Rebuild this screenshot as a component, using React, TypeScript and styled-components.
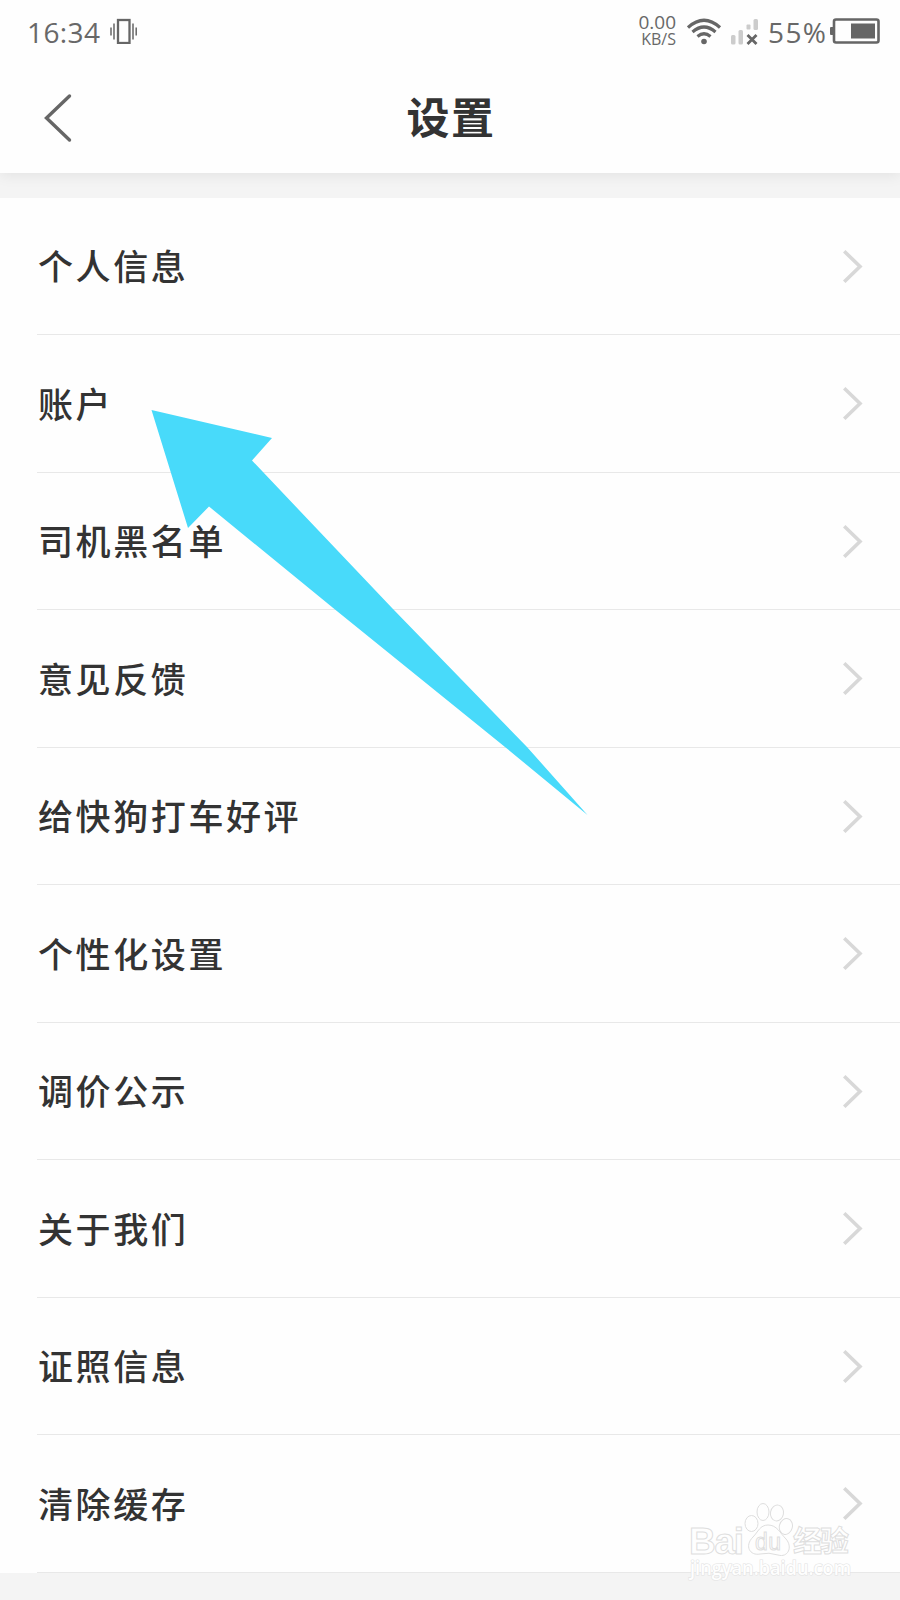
import React from 'react';
import styled, { createGlobalStyle } from 'styled-components';

const GlobalStyle = createGlobalStyle`
  * { box-sizing: border-box; }
  body {
    margin: 0;
    background: #f4f4f4;
    font-family: "Noto Sans CJK SC", sans-serif;
    color: #333;
  }
`;

const Screen = styled.main`
  position: relative;
  width: 900px;
  height: 1600px;
  overflow: hidden;
  background: #f4f4f4;
`;

const Header = styled.header`
  height: 172.5px;
  background: #fefefe;
  box-shadow: 0 2px 14px rgba(0, 0, 0, 0.08);
`;

const StatusBar = styled.div`
  display: flex;
  align-items: center;
  justify-content: space-between;
  height: 62px;
  padding: 0 20px 0 27px;
  color: #686868;
  font-family: "Open Sans", "Noto Sans", sans-serif;
`;

const StatusGroup = styled.div`
  display: flex;
  align-items: center;
`;

const StatusText = styled.span<{ $width: number; $spacing?: number }>`
  width: ${(p) => p.$width}px;
  padding-top: 1px;
  font-size: 28px;
  line-height: 32px;
  letter-spacing: ${(p) => p.$spacing ?? 0}px;
  white-space: nowrap;
`;

const StatusGap = styled.span`
  width: 9px;
`;

const Speed = styled.div`
  display: flex;
  flex-direction: column;
  align-items: flex-end;
  width: 42px;
  margin-right: 11px;
  line-height: 17px;
  font-size: 19px;
`;

const SpeedUnit = styled.span`
  font-size: 16px;
  line-height: 17px;
`;

const NavBar = styled.div`
  display: grid;
  grid-template-columns: 100px 1fr 100px;
  align-items: center;
  height: 110px;
`;

const BackButton = styled.button`
  display: flex;
  padding: 1px 0 0 42px;
  border: 0;
  background: none;
`;

const Title = styled.h1`
  margin: 0 0 4px;
  padding-left: 2px;
  font-size: 43px;
  line-height: 60px;
  font-weight: 700;
  text-align: center;
  letter-spacing: 1.5px;
`;

const List = styled.ul`
  margin: 25px 0 0;
  padding: 0 0 0 37px;
  list-style: none;
  background: #fefefe;
`;

const Row = styled.li`
  display: flex;
  align-items: center;
  justify-content: space-between;
  height: 137.5px;
  padding: 0 37px 0 1px;
  border-bottom: 1px solid #e8e8e8;
`;

const Label = styled.span`
  padding-bottom: 1px;
  font-size: 35px;
  line-height: 50px;
  font-weight: 500;
  letter-spacing: 2.6px;
`;

const Pointer = styled.svg`
  position: absolute;
  left: 150px;
  top: 408px;
`;

const Watermark = styled.svg`
  position: absolute;
  left: 684px;
  top: 1498px;
`;

const items = [
  '个人信息',
  '账户',
  '司机黑名单',
  '意见反馈',
  '给快狗打车好评',
  '个性化设置',
  '调价公示',
  '关于我们',
  '证照信息',
  '清除缓存',
];

const VibrateIcon = () => (
  <svg width="28" height="26" viewBox="0 0 28 26" fill="none" stroke="#666">
    <rect x="8" y="2" width="11.5" height="23" strokeWidth="2.3" />
    <path d="M1 9.500v8M4 5.500v16M23 5.500v16M26.2 9.500v8" strokeWidth="1.5" />
  </svg>
);

const WifiIcon = () => (
  <svg width="35" height="27" viewBox="0 0 35 27" fill="none" stroke="#666" strokeWidth="3.2">
    <path d="M1 9.500Q17-5 33 9.500M5.500 14Q17 4 28.500 14M10.500 18.500Q17 13 23.500 18.500" />
    <circle cx="17" cy="23.500" r="2.800" fill="#666" stroke="none" />
  </svg>
);

const SignalIcon = () => (
  <svg width="28" height="27" viewBox="0 0 28 27">
    <g fill="#ccc">
      <rect x="0" y="17" width="4.500" height="9.500" rx="1.5" />
      <rect x="7.500" y="12" width="4.500" height="14.500" rx="1.5" />
      <rect x="15.500" y="6.500" width="4" height="5" rx="1" />
      <rect x="22.500" y="1" width="4.500" height="11" rx="1.5" />
    </g>
    <path d="M16.500 17l9 9M25.500 17l-9 9" stroke="#666" strokeWidth="2.800" />
  </svg>
);

const BatteryIcon = () => (
  <svg width="50" height="26" viewBox="0 0 50 26">
    <rect x="4" y="1.5" width="44.5" height="23" rx="2" fill="none" stroke="#666" strokeWidth="2.6" />
    <rect x="0" y="9" width="4" height="8" rx="1" fill="#666" />
    <rect x="21" y="5.5" width="24" height="15" fill="#666" />
  </svg>
);

const BackIcon = () => (
  <svg width="30" height="50" viewBox="0 0 30 50" fill="none">
    <path d="M27.5 3L4.5 25l23 22" stroke="#666" strokeWidth="3.4" strokeLinecap="round" />
  </svg>
);

const Chevron = () => (
  <svg width="20" height="34" viewBox="0 0 20 34" fill="none">
    <path d="M2.5 3.500L17 17.500 2.5 31.500" stroke="#d8d8d8" strokeWidth="3.6" strokeLinecap="square" />
  </svg>
);

const App = () => (
  <>
    <GlobalStyle />
    <Screen>
      <Header>
        <StatusBar>
          <StatusGroup>
            <StatusText $width={83} $spacing={0.4}>16:34</StatusText>
            <VibrateIcon />
          </StatusGroup>
          <StatusGroup>
            <Speed>
              0.00
              <SpeedUnit>KB/S</SpeedUnit>
            </Speed>
            <WifiIcon />
            <StatusGap />
            <SignalIcon />
            <StatusGap />
            <StatusText $width={62} $spacing={1.4}>55%</StatusText>
            <BatteryIcon />
          </StatusGroup>
        </StatusBar>
        <NavBar>
          <BackButton aria-label="返回">
            <BackIcon />
          </BackButton>
          <Title>设置</Title>
        </NavBar>
      </Header>
      <List>
        {items.map((item) => (
          <Row key={item}>
            <Label>{item}</Label>
            <Chevron />
          </Row>
        ))}
      </List>
      <Pointer width="440" height="410" viewBox="150 408 440 410">
        <path
          d="M151.5 410L272 438 252 460.500 393 609 527 747 587.500 815 505 747 335 609.500 209 506.500 188 528Z"
          fill="#48dafa"
        />
      </Pointer>
      <Watermark
        width="180"
        height="90"
        viewBox="0 0 180 90"
        fill="#fefefe"
        stroke="#dedede"
        strokeWidth="1"
        fontFamily='"Liberation Sans", "Noto Sans CJK SC", sans-serif'
      >
        <text x="5" y="55.500" fontSize="37" fontWeight="700" textLength="55">Bai</text>
        <ellipse cx="67.500" cy="25.500" rx="6.500" ry="8" />
        <ellipse cx="79" cy="14" rx="6" ry="8.500" />
        <ellipse cx="93" cy="15" rx="6.500" ry="8" transform="rotate(10 93 15)" />
        <ellipse cx="102" cy="28.500" rx="6.500" ry="8" transform="rotate(15 102 28)" />
        <path d="M84 27C76 27 74 34 69 39C60 48 66 58 76 56Q85 54 94 57C104 60 109 49 102 41C96 35 93 27 84 27Z" />
        <text x="71" y="52" fontSize="23" textLength="26">du</text>
        <text x="109" y="53.500" fontSize="29" fontWeight="700" textLength="56">经验</text>
        <text
          x="6"
          y="77"
          fontSize="20"
          fontFamily='"Open Sans", sans-serif'
          fontWeight="600"
          textLength="161"
          lengthAdjust="spacingAndGlyphs"
          stroke="#e2e2e2"
          strokeWidth="1.2"
          paintOrder="stroke"
        >
          jingyan.baidu.com
        </text>
      </Watermark>
    </Screen>
  </>
);

export default App;
